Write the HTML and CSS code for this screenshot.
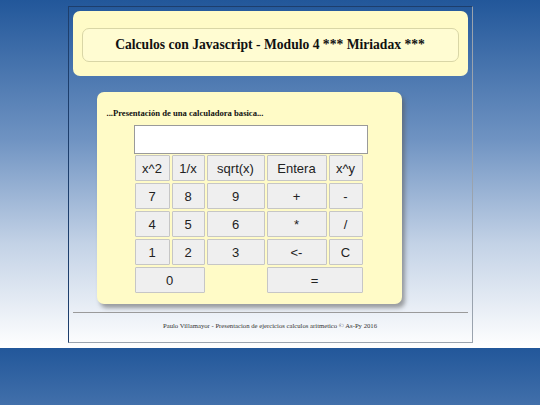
FILE: index.html
```html
<!DOCTYPE html>
<html lang="es">
<head>
<meta charset="utf-8">
<title>Calculadora</title>
<link rel="stylesheet" href="styles.css">
</head>
<body>
<div class="page">
  <header class="header">
    <div class="title-box">
      <h1 class="title">Calculos con Javascript - Modulo 4 *** Miriadax ***</h1>
    </div>
  </header>
  <main class="main">
    <section class="panel">
      <p class="subtitle">...Presentación de una calculadora basica...</p>
      <div class="calc">
        <input class="display" type="text" value="">
        <div class="keys">
          <button class="key">x^2</button>
          <button class="key">1/x</button>
          <button class="key">sqrt(x)</button>
          <button class="key">Entera</button>
          <button class="key">x^y</button>
          <button class="key">7</button>
          <button class="key">8</button>
          <button class="key">9</button>
          <button class="key">+</button>
          <button class="key">-</button>
          <button class="key">4</button>
          <button class="key">5</button>
          <button class="key">6</button>
          <button class="key">*</button>
          <button class="key">/</button>
          <button class="key">1</button>
          <button class="key">2</button>
          <button class="key">3</button>
          <button class="key">&lt;-</button>
          <button class="key">C</button>
          <button class="key span-a">0</button>
          <button class="key span-b">=</button>
        </div>
      </div>
    </section>
  </main>
  <footer class="footer">
    <p class="credits">Paulo Villamayor - Presentacion de ejercicios calculos aritmetico © As-Py 2016</p>
  </footer>
</div>
</body>
</html>
```
FILE: styles.css
```css
html {
  background: linear-gradient(#22579a 0%, #6f93c2 40%, #c3d2e6 70%, #ffffff 100%);
  background-size: 100% 348px;
  background-repeat: repeat-y;
}
body {
  margin: 0;
  font-family: "Liberation Serif", "Times New Roman", serif;
}
.page {
  width: 395px;
  margin: 6px auto;
  padding: 4px 4px 0;
  border: 1px solid #6f7f95;
  border-color: #1d3e6c #9aa3ae #9aa3ae #1d3e6c;
}
.header {
  background: #fffbc7;
  border-radius: 7px;
  padding: 17px 9px 14px;
}
.title-box {
  background: #fffcd2;
  border: 1px solid #d9d6a6;
  border-radius: 7px;
  height: 32px;
  display: flex;
  align-items: center;
  justify-content: center;
}
.title {
  margin: 0;
  font-size: 13.6px;
  font-weight: bold;
  color: #111;
}
.main {
  padding: 16px 66px 0 24px;
}
.panel {
  background: #fffbc7;
  border-radius: 7px;
  box-shadow: 3px 4px 4px rgba(90, 90, 90, 0.55);
  padding: 16px 10px 10px;
  height: 186px;
}
.subtitle {
  margin: 0;
  font-size: 8.6px;
  font-weight: bold;
  color: #111;
}
.calc {
  margin: 7px 0 0 27px;
  width: 234px;
}
.display {
  display: block;
  box-sizing: border-box;
  width: 234px;
  height: 29px;
  margin: 0;
  border: 1px solid #9a9a9a;
  background: #fff;
}
.keys {
  display: grid;
  grid-template-columns: 35px 33px 58px 60px 34px;
  grid-auto-rows: 26px;
  gap: 2px;
  margin: 1px 0 0 1px;
}
.key {
  margin: 0;
  padding: 0;
  background: #efefef;
  border: 1px solid #c6c6c6;
  border-radius: 1px;
  font-family: "Liberation Sans", Arial, sans-serif;
  font-size: 13px;
  color: #222;
}
.span-a {
  grid-column: 1 / 3;
}
.span-b {
  grid-column: 4 / 6;
}
.footer {
  border-top: 1px solid #9a9a9a;
  margin-top: 8px;
  padding: 9px 0 12px;
}
.credits {
  margin: 0;
  text-align: center;
  font-size: 6.7px;
  line-height: 8px;
  color: #333;
}
```
